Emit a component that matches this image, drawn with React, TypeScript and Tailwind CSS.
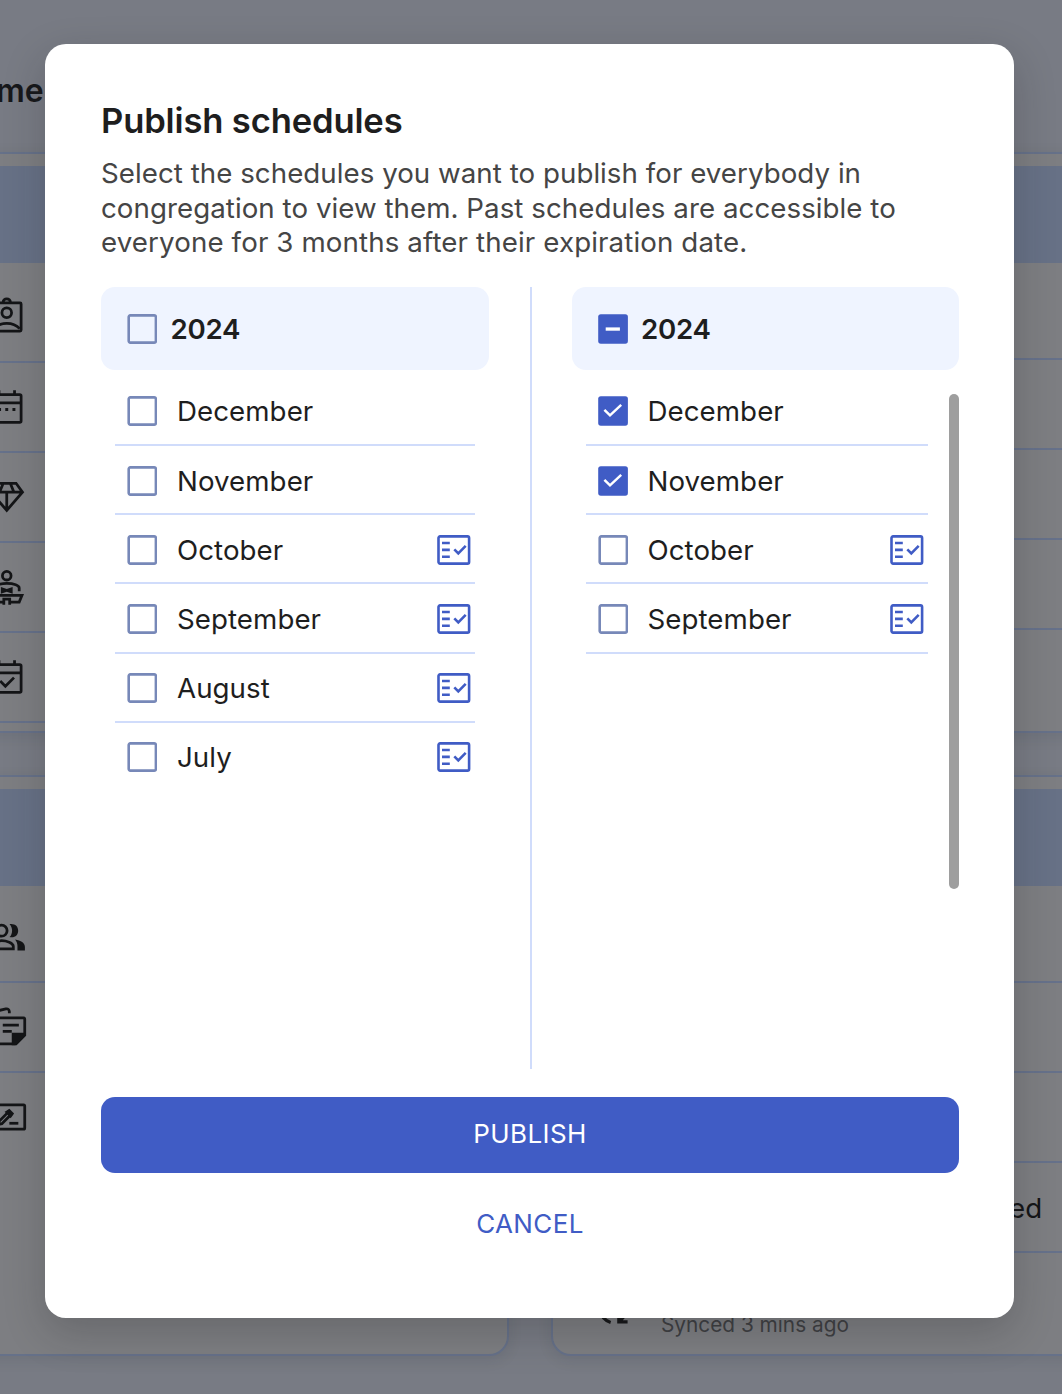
import { useState, type ReactNode } from "react";

type Month = { name: string; checked?: boolean; ready?: boolean };

const leftMonths: Month[] = [
  { name: "December" },
  { name: "November" },
  { name: "October", ready: true },
  { name: "September", ready: true },
  { name: "August", ready: true },
  { name: "July", ready: true },
];

const rightMonths: Month[] = [
  { name: "December", checked: true },
  { name: "November", checked: true },
  { name: "October", ready: true },
  { name: "September", ready: true },
];

function Checkbox({ state, onClick }: { state: "off" | "on" | "mixed"; onClick?: () => void }) {
  if (state === "off") {
    return (
      <button onClick={onClick} className="block size-[30px] shrink-0">
        <svg viewBox="0 0 30 30" className="size-[30px]" fill="none">
          <rect x="1.7" y="1.4" width="27.2" height="27.2" rx="1.6" stroke="#7788b8" strokeWidth="2.6" />
        </svg>
      </button>
    );
  }
  return (
    <button onClick={onClick} className="block size-[30px] shrink-0">
      <svg viewBox="0 0 30 30" className="size-[30px]" fill="none">
        <rect x="0.2" y="0.2" width="29.7" height="29.5" rx="2.6" fill="#405cc5" />
        {state === "on" ? (
          <path d="M6.4 13.8 12 19.3 23.2 8.9" stroke="#fff" strokeWidth="2.5" />
        ) : (
          <rect x="7.7" y="13.4" width="14.2" height="3.3" fill="#fff" />
        )}
      </svg>
    </button>
  );
}

function FactCheckIcon() {
  return (
    <svg viewBox="0 0 34 30" className="h-[30px] w-[34px] shrink-0" fill="none" stroke="#405cc5" strokeWidth="2.6">
      <rect x="1.5" y="1.4" width="30.6" height="27.2" rx="1.6" />
      <path d="M5 8h7.8M5 14.9h7.8M5 21.8h7.8" />
      <path d="m17.3 14.3 4 4 7.4-7.4" />
    </svg>
  );
}

function MonthList({ months, className }: { months: Month[]; className: string }) {
  const [checked, setChecked] = useState(months.map((m) => !!m.checked));
  return (
    <div className={className}>
      {months.map((m, i) => (
        <div
          key={m.name}
          className={
            i < 5
              ? "flex h-[69.23px] items-center border-b-2 border-[#d0dcfb] pl-[12.4px] pr-[4px] pt-[2px]"
              : "flex h-[69.23px] items-center pb-0.5 pl-[12.4px] pr-[4px] pt-[2px]"
          }
        >
          <Checkbox
            state={checked[i] ? "on" : "off"}
            onClick={() => setChecked(checked.map((c, j) => (j === i ? !c : c)))}
          />
          <span className="ml-[19.6px] mt-[1px] flex-1 text-[27.7px] leading-[35px] tracking-[0.06px] text-[#1e1e1e]">
            {m.name}
          </span>
          {m.ready && <FactCheckIcon />}
        </div>
      ))}
    </div>
  );
}

function YearHeader({ state }: { state: "off" | "mixed" }) {
  return (
    <div className="flex h-[83px] items-center rounded-[14px] bg-[#eff4ff] pl-[26.4px] pt-[1px]">
      <Checkbox state={state} />
      <span className="ml-[13px] mt-[1px] text-[27.7px] font-semibold leading-[35px] tracking-[-0.25px] text-[#1e1e1e]">
        2024
      </span>
    </div>
  );
}

function Icon({ children }: { children?: ReactNode }) {
  return (
    <svg viewBox="0 0 24 24" className="size-[41.5px] shrink-0" fill="none" stroke="#141517" strokeWidth="1.6">
      {children}
    </svg>
  );
}

const personCardIcon = (
  <Icon>
    <rect x="3.9" y="4" width="16.4" height="16.3" rx=".6" />
    <circle cx="12" cy="9.7" r="2.8" />
    <path d="M4.5 18.9C6.5 16.7 9 15.8 12 15.8s5.5.9 7.5 3.1" />
    <path d="M9.9 3.7a2.1 2.1 0 0 1 4.2 0" />
  </Icon>
);

const calendarIcon = (
  <Icon>
    <rect x="3.7" y="5" width="16.6" height="16.1" rx=".8" />
    <path d="M3.7 9.8h16.6M7.5 2.5v2.5M16.5 2.5v2.5" />
    <path d="M7 13.6h1.7M11.150 13.6h1.7M15.3 13.6h1.7" strokeWidth="1.7" />
  </Icon>
);

const diamondIcon = (
  <Icon>
    <path d="M6.6 4.2h10.8l3.7 5.1L12 19.9 2.9 9.3zM2.9 9.3h18.2M12 9.3v10.6M9.9 4.3 7.9 9.3M14.1 4.3l2 5" />
  </Icon>
);

const speakerIcon = (
  <Icon>
    <circle cx="12" cy="5.6" r="2.5" />
    <path d="M4.8 14.6v-1.9c0-1.4 3-2.6 7.2-2.6s7.2 1.2 7.2 2.6v1.9" />
    <path d="M8.6 12.2 12 13.3l3.4-1.1v3.8L12 14.9l-3.4 1.1z" fill="#141517" stroke="none" />
    <path d="M10.3 22.4v-3.3h3.4v3.3M10.3 20.9H4.8L3.2 17h17.6l-1.6 3.9h-5.5" />
  </Icon>
);

const calendarCheckIcon = (
  <Icon>
    <rect x="3.7" y="5" width="16.6" height="16.1" rx=".8" />
    <path d="M3.7 9.8h16.6M7.5 2.5v2.5M16.5 2.5v2.5M8.2 14.5l3 3 5-5" />
  </Icon>
);

const peopleIcon = (
  <Icon>
    <circle cx="9" cy="8.5" r="3.2" />
    <path d="M2.7 19v-1.4c0-2 3.5-3.3 6.300-3.300s6.800 1.300 6.800 3.300V19z" />
    <path d="M13.6 12.2c2-1.8 2-5.600 0-7.500 3.200-.4 5 1.300 5 3.800s-1.800 4.300-5 3.700zM16.800 13.600c3.400.5 5.700 2 5.700 4.300v2h-4.300v-2.500c0-1.500-.5-2.800-1.400-3.800z" fill="#141517" stroke="none" />
  </Icon>
);

const notesIcon = (
  <Icon>
    <path d="M3 6.900h18.600q.8 0 .8.800v9.200l-5 5H3z" />
    <path d="M22.500 15.500v1.700L17 22.700h-2.100v-7.200z" fill="#141517" stroke="none" />
    <path d="M-1 4.500 11.500 1.700q1.700-.4 2 1.500v1M9.700 11.100h9.300M9.700 14.700h5.200" />
  </Icon>
);

const editCardIcon = (
  <Icon>
    <rect x="2.2" y="4.500" width="20.200" height="14.100" rx=".7" />
    <path d="m7.300 15.800.4-1.900 5-5 1.500 1.500-5 5z" />
    <path d="M12 8.700l1.400-.9 1.800 1.800-1 1.400z" fill="#141517" />
    <path d="M13.500 15.200h5.200" />
  </Icon>
);

function Row({ children }: { children?: ReactNode }) {
  return (
    <div className="flex h-[90px] shrink-0 items-center border-b-2 border-[#66718a] pl-[25.5px]">{children}</div>
  );
}

function Card({ className, children }: { className: string; children?: ReactNode }) {
  return (
    <div className={"flex flex-col border-2 border-[#667189] bg-[#7d7e82] shadow-[0_4px_14px_rgba(28,35,50,0.1)] " + className}>
      <div className="h-[12px] shrink-0" />
      <div className="h-[97px] shrink-0 bg-[#677186]" />
      {children}
    </div>
  );
}

function Background() {
  return (
    <div className="flex h-full gap-[42px] bg-[#787b84]">
      <div className="-ml-[42px] flex w-[551px] shrink-0 flex-col">
        <div className="h-[152px] shrink-0 pl-[38px] pt-[70px] text-[32px] font-semibold leading-[41px] text-[#17181b]">
          men
        </div>
        <Card className="h-[581px] shrink-0">
          <div className="h-[10px] shrink-0" />
          <Row>{personCardIcon}</Row>
          <Row>{calendarIcon}</Row>
          <Row>{diamondIcon}</Row>
          <Row>{speakerIcon}</Row>
          <Row>{calendarCheckIcon}</Row>
        </Card>
        <Card className="mt-[42px] h-[581px] shrink-0 rounded-b-[20px]">
          <div className="h-[7px] shrink-0" />
          <Row>{peopleIcon}</Row>
          <Row>{notesIcon}</Row>
          <div className="flex h-[90px] items-center pl-[25.5px]">{editCardIcon}</div>
        </Card>
      </div>
      <div className="flex w-[640px] shrink-0 flex-col pt-[152px]">
        <Card className="h-[581px] shrink-0">
          <div className="h-[7px] shrink-0" />
          <Row />
          <Row />
          <Row />
          <Row />
        </Card>
        <Card className="mt-[42px] h-[581px] shrink-0 rounded-b-[20px]">
          <div className="h-[7px] shrink-0" />
          <Row />
          <Row />
          <Row />
          <div className="flex h-[90px] shrink-0 items-center border-b-2 border-[#66718a] pl-[456px] pt-[3px] text-[27.7px] text-[#141517]">
            ed
          </div>
          <div className="flex pl-[39.5px] pt-[36px]">
            <svg viewBox="0 0 24 24" className="size-[41.5px]" fill="#141517">
              <path
                transform="matrix(-1 0 0 1 24 0)"
                d="M4 20v-2h2.750l-.4-.35q-1.300-1.150-1.825-2.625T4 12.050q0-2.775 1.663-4.938T10 4.250v2.100Q8.200 7 7.100 8.563T6 12.050q0 1.125.425 2.188T7.750 16.200l.25.25V14h2v6z"
              />
              <path d="M4.600 9.500q-1 4.500 1.600 7.300 1.600 1.900 4 2.600" fill="none" stroke="#141517" strokeWidth="1.900" />
            </svg>
            <span className="ml-[27px] mt-[23px] text-[20.8px] leading-[26px] text-[#3e3f42]">Synced 3 mins ago</span>
          </div>
        </Card>
      </div>
    </div>
  );
}

export default function App() {
  return (
    <div className="relative h-[1394px] w-[1062px] overflow-hidden font-['Inter',sans-serif]">
      <Background />
      <div className="absolute inset-0 pl-[45px] pt-[44px]">
        <div className="flex h-[1274px] w-[969px] flex-col rounded-[21px] bg-white pl-[56px] pr-[55px] pt-[55px] shadow-[0_14px_42px_rgba(28,28,28,0.22)]">
          <h1 className="text-[34.6px] font-semibold leading-[42px] tracking-[-0.15px] text-[#1e1e1e]">
            Publish schedules
          </h1>
          <p className="mt-[15px] whitespace-nowrap text-[27.7px] leading-[34.6px] text-[#454545]">
            <span className="tracking-[0.04px]">Select the schedules you want to publish for everybody in</span>
            <br />
            <span className="tracking-[0.05px]">congregation to view them. Past schedules are accessible to</span>
            <br />
            <span className="tracking-[0.12px]">everyone for 3 months after their expiration date.</span>
          </p>
          <div className="mt-[27px] flex h-[782px] shrink-0">
            <div className="w-[387.5px]">
              <YearHeader state="off" />
              <MonthList months={leftMonths} className="mx-[14px] mt-[7px]" />
            </div>
            <div className="ml-[41.5px] mr-[39.5px] w-[2px] bg-[#d0dcfb]" />
            <div className="w-[387.5px]">
              <YearHeader state="mixed" />
              <div className="flex justify-between pl-[14px]">
                <MonthList months={rightMonths} className="mt-[7px] w-[342.5px]" />
                <div className="mt-[24px] h-[495px] w-[10.5px] rounded-full bg-[#9e9e9e]" />
              </div>
            </div>
          </div>
          <button className="mt-[28px] h-[76px] shrink-0 rounded-[14px] bg-[#405cc5] pb-[2px] text-[26px] tracking-[0.4px] text-white">
            PUBLISH
          </button>
          <button className="mt-[13px] h-[76px] shrink-0 text-[26px] tracking-[0.4px] text-[#405cc5]">CANCEL</button>
        </div>
      </div>
    </div>
  );
}
